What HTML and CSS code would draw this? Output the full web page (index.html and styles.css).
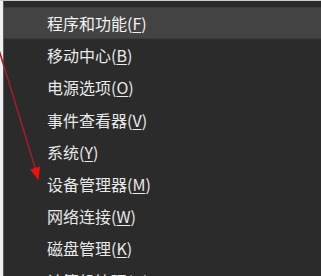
FILE: index.html
```html
<!DOCTYPE html>
<html lang="zh-CN">
<head>
<meta charset="utf-8">
<link rel="stylesheet" href="styles.css">
</head>
<body>
<div class="screen">
  <div class="edge"></div>
  <div class="menu">
    <ul class="items">
      <li class="item active">程序和功能(<u>F</u>)</li>
      <li class="item">移动中心(<u>B</u>)</li>
      <li class="item">电源选项(<u>O</u>)</li>
      <li class="item">事件查看器(<u>V</u>)</li>
      <li class="item">系统(<u>Y</u>)</li>
      <li class="item">设备管理器(<u>M</u>)</li>
      <li class="item">网络连接(<u>W</u>)</li>
      <li class="item">磁盘管理(<u>K</u>)</li>
      <li class="item">计算机管理(<u>G</u>)</li>
    </ul>
  </div>
  <svg class="arrow" width="60" height="200" viewBox="0 0 60 200">
    <line x1="-1" y1="49" x2="35.5" y2="168" stroke="#9c1f2b" stroke-width="1.6"/>
    <polygon points="38.5,179 40,165.5 30,168.5" fill="#ee1111"/>
  </svg>
</div>
</body>
</html>
```
FILE: styles.css
```css
html, body {
  margin: 0;
  padding: 0;
  background: #2b2b2b;
}
.screen {
  position: relative;
  display: flex;
  width: 321px;
  height: 276px;
  overflow: hidden;
  border-top: 1px solid #cbcbcb;
  box-sizing: border-box;
  background: #2b2b2b;
}
.edge {
  width: 3px;
  flex: none;
  background: #eef0f2;
  border-right: 1px solid #5a5a5a;
}
.menu {
  flex: 1;
  padding-top: 6px;
}
.items {
  list-style: none;
  margin: 0;
  padding: 0;
}
.item {
  height: 32.2px;
  line-height: 32px;
  padding-left: 43px;
  font-family: "Noto Sans CJK SC", "Noto Sans", sans-serif;
  font-size: 16px;
  color: #e9e9e9;
  white-space: nowrap;
}
.item u {
  text-underline-offset: 2px;
}
.item.active {
  background: #434343;
  box-shadow: inset 0 1px 0 #3a3a3a, inset 0 -1px 0 #3a3a3a;
  color: #f2f2f2;
}
.arrow {
  position: absolute;
  left: 0;
  top: 0;
}
```
